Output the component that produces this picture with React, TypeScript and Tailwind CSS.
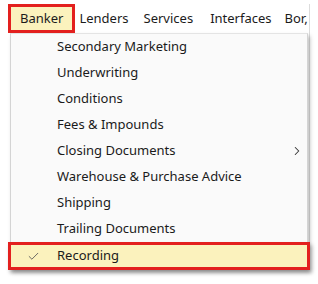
import { Check, ChevronRight } from "lucide-react";

const items = [
  "Secondary Marketing",
  "Underwriting",
  "Conditions",
  "Fees & Impounds",
  "Closing Documents",
  "Warehouse & Purchase Advice",
  "Shipping",
  "Trailing Documents",
];

const MenuRow = ({ label, sub }: { label: string; sub?: boolean }) => {
  return (
    <div className="flex items-center h-[26px] pl-[46px] pr-[3px]">
      <span className="flex-1">{label}</span>
      {sub && <ChevronRight className="w-[14px] h-[14px] text-[#333]" strokeWidth={1.8} />}
    </div>
  );
};

export default function App() {
  return (
    <div
      className="w-[318px] h-[284px] bg-white overflow-hidden text-[13px] text-[#1b1b1b]"
      style={{ fontFamily: '"Noto Sans", "Open Sans", sans-serif' }}
    >
      <div className="ml-[8px] mt-[4px] w-[302px] border-r border-[#dcdcdc]">
        <div className="flex items-center h-[29px] whitespace-nowrap overflow-hidden">
          <div className="h-full flex items-center px-[9px] bg-[#fbf2bd] border-[3px] border-[#e3201e]">
            Banker
          </div>
          <span className="ml-[4px]">Lenders</span>
          <span className="ml-[15px]">Services</span>
          <span className="ml-[17px]">Interfaces</span>
          <span className="ml-[13px]">Bor,</span>
        </div>
        <div className="ml-[2px] mr-[1px] bg-[#fafafa] border border-[#d4d4d4] border-t-[#e4e4e4] shadow-[2px_3px_4px_rgba(0,0,0,0.25)]">
          {items.map((label) => (
            <MenuRow key={label} label={label} sub={label === "Closing Documents"} />
          ))}
          <div className="-mx-[3px] -mb-[2px] h-[28px] flex items-center bg-[#fbf2bd] border-[3px] border-[#e3201e] shadow-[2px_3px_4px_rgba(0,0,0,0.3)]">
            <Check className="ml-[16px] w-[13px] h-[13px] text-[#555]" strokeWidth={1.6} />
            <span className="ml-[17px]">Recording</span>
          </div>
        </div>
      </div>
    </div>
  );
}
